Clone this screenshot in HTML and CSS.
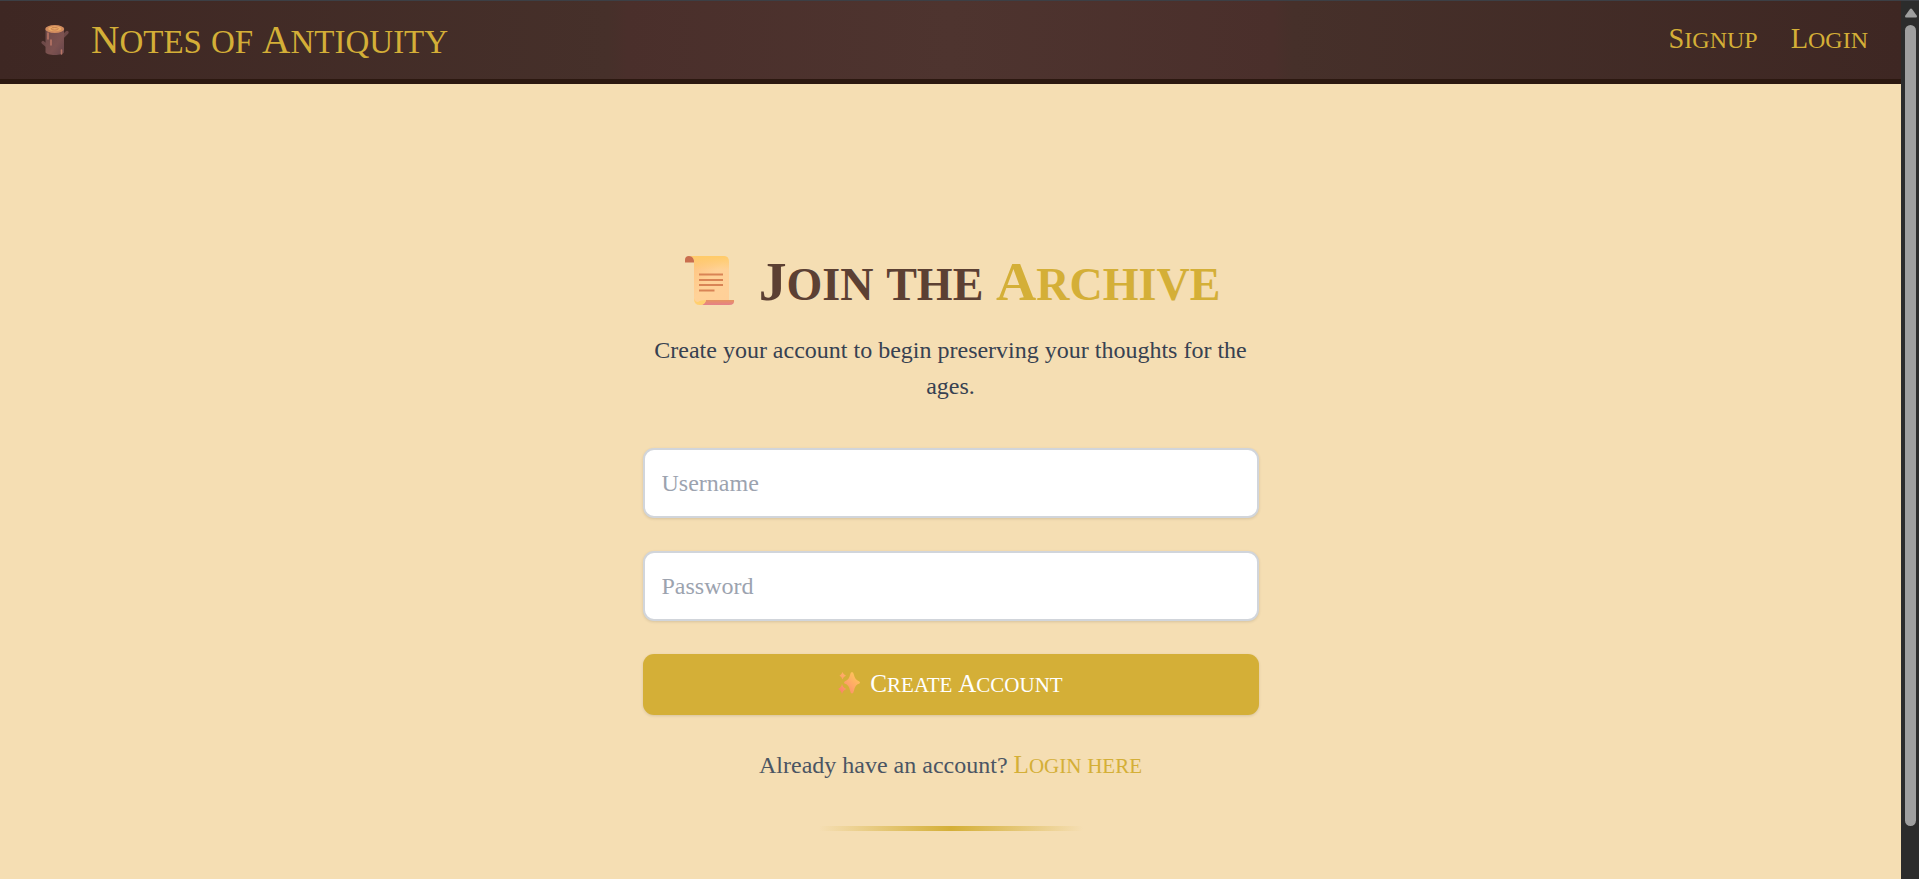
FILE: index.html
```html
<!DOCTYPE html>
<html lang="en">
<head>
<meta charset="utf-8">
<title>Notes of Antiquity</title>
<link rel="stylesheet" href="styles.css">
</head>
<body>
<div class="page">
  <header class="header">
    <a class="brand" href="#">
      <svg class="brand-icon" viewBox="0 0 28 32" aria-hidden="true">
        <defs><linearGradient id="bark" x1="0" y1="0" x2="1" y2="1"><stop offset="0" stop-color="#6d4a48"/><stop offset=".6" stop-color="#7d5250"/><stop offset="1" stop-color="#65454a"/></linearGradient></defs>
        <path d="M2 18.500l6 5M26 8.500l-5 5" stroke="#6d4948" stroke-width="3.200" stroke-linecap="round"/>
        <path d="M4.500 5v23c0 4 18.500 4 18.500 0V5z" fill="url(#bark)"/>
        <path d="M7 9v6M10 16v5M20.500 26v4" stroke="#b87565" stroke-width="1.600" stroke-linecap="round"/>
        <ellipse cx="13.750" cy="5" rx="9.500" ry="4" fill="#d18c5f"/>
        <ellipse cx="13.750" cy="4.800" rx="6.500" ry="2.500" fill="#e9aa66"/>
        <ellipse cx="13.750" cy="4.800" rx="3.600" ry="1.300" fill="none" stroke="#c57d52"/>
      </svg>
      <span class="brand-name caps"><span class="word">Notes</span> <span class="word low">of</span> <span class="word">Antiquity</span></span>
    </a>
    <nav class="nav">
      <a class="caps" href="#"><span class="word">Signup</span></a>
      <a class="caps" href="#"><span class="word">Login</span></a>
    </nav>
  </header>
  <main class="main">
    <h1 class="title">
      <svg class="title-icon" viewBox="0 0 50 50" aria-hidden="true">
        <defs>
          <linearGradient id="paper" x1="0" y1="0" x2="1" y2="1"><stop offset="0" stop-color="#ffc078"/><stop offset=".5" stop-color="#ffd298"/><stop offset="1" stop-color="#ffcf98"/></linearGradient>
          <linearGradient id="top" x1="0" y1="0" x2="0" y2="1"><stop offset="0" stop-color="#ffcb68"/><stop offset="1" stop-color="#ffcb68" stop-opacity="0"/></linearGradient>
          <linearGradient id="roll" x1="0" y1="0" x2="0" y2="1"><stop offset="0" stop-color="#e79460"/><stop offset="1" stop-color="#e5808a"/></linearGradient>
        </defs>
        <path d="M4 0h35q5 0 5 6v38l-24 5h-6q-5 0-5-6V6q0-6-5-6z" fill="url(#paper)"/>
        <path d="M4 0h35q5 0 5 6v8H9V6q0-6-5-6z" fill="url(#top)"/>
        <path d="M0 6.500V4a4 4 0 0 1 4-4q5 0 5 6.500z" fill="#c96e4e"/>
        <path d="M21 44h28q1 5-5 5H15q5 0 6-5z" fill="url(#roll)"/>
        <path d="M9 42q0 7 6 7 5 0 6-5-6 0-8 2-3 0-4-4z" fill="#ffd06e"/>
        <path d="M14 18.500h24M14 24h24M14 29h24M14 34.500h15.500" stroke="#d98455" stroke-width="2"/>
      </svg>
      <span class="caps"><span class="word">Join</span> <span class="word low">the</span> <span class="word gold">Archive</span></span>
    </h1>
    <p class="intro">Create your account to begin preserving your thoughts for the ages.</p>
    <form class="form">
      <input class="field" type="text" placeholder="Username" aria-label="Username">
      <input class="field" type="password" placeholder="Password" aria-label="Password">
      <button class="submit" type="button">
        <svg class="submit-icon" viewBox="0 0 22 22" aria-hidden="true">
          <defs><linearGradient id="spark" x1="1" y1="0" x2="0" y2="1"><stop offset="0" stop-color="#ffcf55"/><stop offset=".5" stop-color="#ffa768"/><stop offset="1" stop-color="#f87c68"/></linearGradient></defs>
          <path d="M14 0q1.400 0 2 3 1 5 5 6.200 2 1.300 0 2.600-4 1.200-5 6.700-.6 3-2 3t-2-3Q11 13 7 11.800q-2-1.300 0-2.600Q11 8 12 3q.6-3 2-3zM4.500 0q1 3 3.500 3.800Q5.500 4.500 4.500 7.500 3.500 4.500 1.500 3.800 3.500 3 4.500 0zM4 12q1 4 4.500 5-3.500 1-4.500 5-1-4-4-5 3-1 4-5z" fill="url(#spark)"/>
        </svg>
        <span class="caps"><span class="word">Create</span> <span class="word">Account</span></span>
      </button>
    </form>
    <p class="switch">Already have an account? <a class="caps" href="#"><span class="word">Login</span> <span class="word low">here</span></a></p>
    <div class="divider"></div>
  </main>
</div>
<div class="scrollbar" aria-hidden="true">
  <svg class="scroll-arrow" viewBox="0 0 12 10"><path d="M5 1q1-1 2 0l5 7q0 1.500-1 1.500H1Q0 9.500 0 8z" fill="#9f9f9f"/></svg>
  <div class="scroll-thumb"></div>
</div>
</body>
</html>
```
FILE: styles.css
```css
* { box-sizing: border-box; }

body {
  margin: 0;
  min-height: 100vh;
  display: flex;
  border-top: 1px solid #3c3f45;
  background: #f5deb3;
  font-family: "Liberation Serif", Georgia, serif;
  font-size: 24px;
  color: #374151;
}

a { color: #d4af37; text-decoration: none; }

.page { flex: 1; display: flex; flex-direction: column; }

.word { display: inline-block; font-size: 1.3em; line-height: 1; font-variant: small-caps; }
.word::first-letter { font-size: 0.84em; }
.word.low::first-letter { font-size: 1em; }
.gold { color: #d4af37; }

.header {
  display: flex;
  align-items: center;
  justify-content: space-between;
  height: 83px;
  padding: 0 33px 0 41px;
  border-bottom: 5px solid #2c1810;
  background: linear-gradient(90deg, #3e2723 0%, #46302a 32%, #4a2f2b 33%, #4e342f 50%, #4a2f2b 67%, #46302a 68%, #3e2723 100%);
}

.brand { display: flex; align-items: center; gap: 22px; }
.brand-icon { width: 28px; height: 32px; }
.brand-name { padding-bottom: 4px; font-size: 36px; }
.nav { display: flex; gap: 33px; padding-bottom: 6px; font-size: 26px; }

.main {
  width: 616px;
  max-width: 100%;
  margin: 0 auto;
  padding-top: 161px;
  display: flex;
  flex-direction: column;
  text-align: center;
}

.title {
  display: flex;
  align-items: center;
  justify-content: center;
  gap: 24px;
  margin: 0 0 16px;
  padding-left: 4px;
  font-size: 51px;
  line-height: 66px;
  color: #5c4033;
}
.title-icon { width: 50px; height: 50px; }

.intro { margin: 0 0 44px; line-height: 36px; }

.form { display: flex; flex-direction: column; gap: 33px; }

.field {
  height: 70px;
  padding: 0 17px;
  border: 2px solid #d1d5db;
  border-radius: 11px;
  background: #fff;
  box-shadow: 0 1px 3px rgba(0, 0, 0, 0.12);
  font: inherit;
  color: #374151;
}
.field::placeholder { color: #9ca3af; opacity: 1; }

.submit {
  display: flex;
  align-items: center;
  justify-content: center;
  gap: 10px;
  height: 61px;
  padding: 0 0 4px;
  border: 0;
  border-radius: 11px;
  background: #d4af37;
  box-shadow: 0 1px 3px rgba(0, 0, 0, 0.12);
  font: inherit;
  font-size: 23px;
  color: #fff;
}
.submit-icon { width: 22px; height: 22px; }

.switch { margin: 33px 0 44px; line-height: 33px; color: #4b5563; }
.switch .caps { font-size: 23px; }

.divider {
  align-self: center;
  width: 264px;
  height: 5px;
  background: linear-gradient(90deg, transparent, #d4af37, transparent);
}

.scrollbar {
  display: flex;
  flex-direction: column;
  align-items: center;
  gap: 7px;
  width: 18px;
  height: calc(100vh - 1px);
  padding: 7px 0 53px 1px;
  background: #2c2c2c;
}
.scroll-arrow { width: 12px; height: 10px; }
.scroll-thumb { flex: 1; width: 11px; border-radius: 6px; background: #9f9f9f; }
```
